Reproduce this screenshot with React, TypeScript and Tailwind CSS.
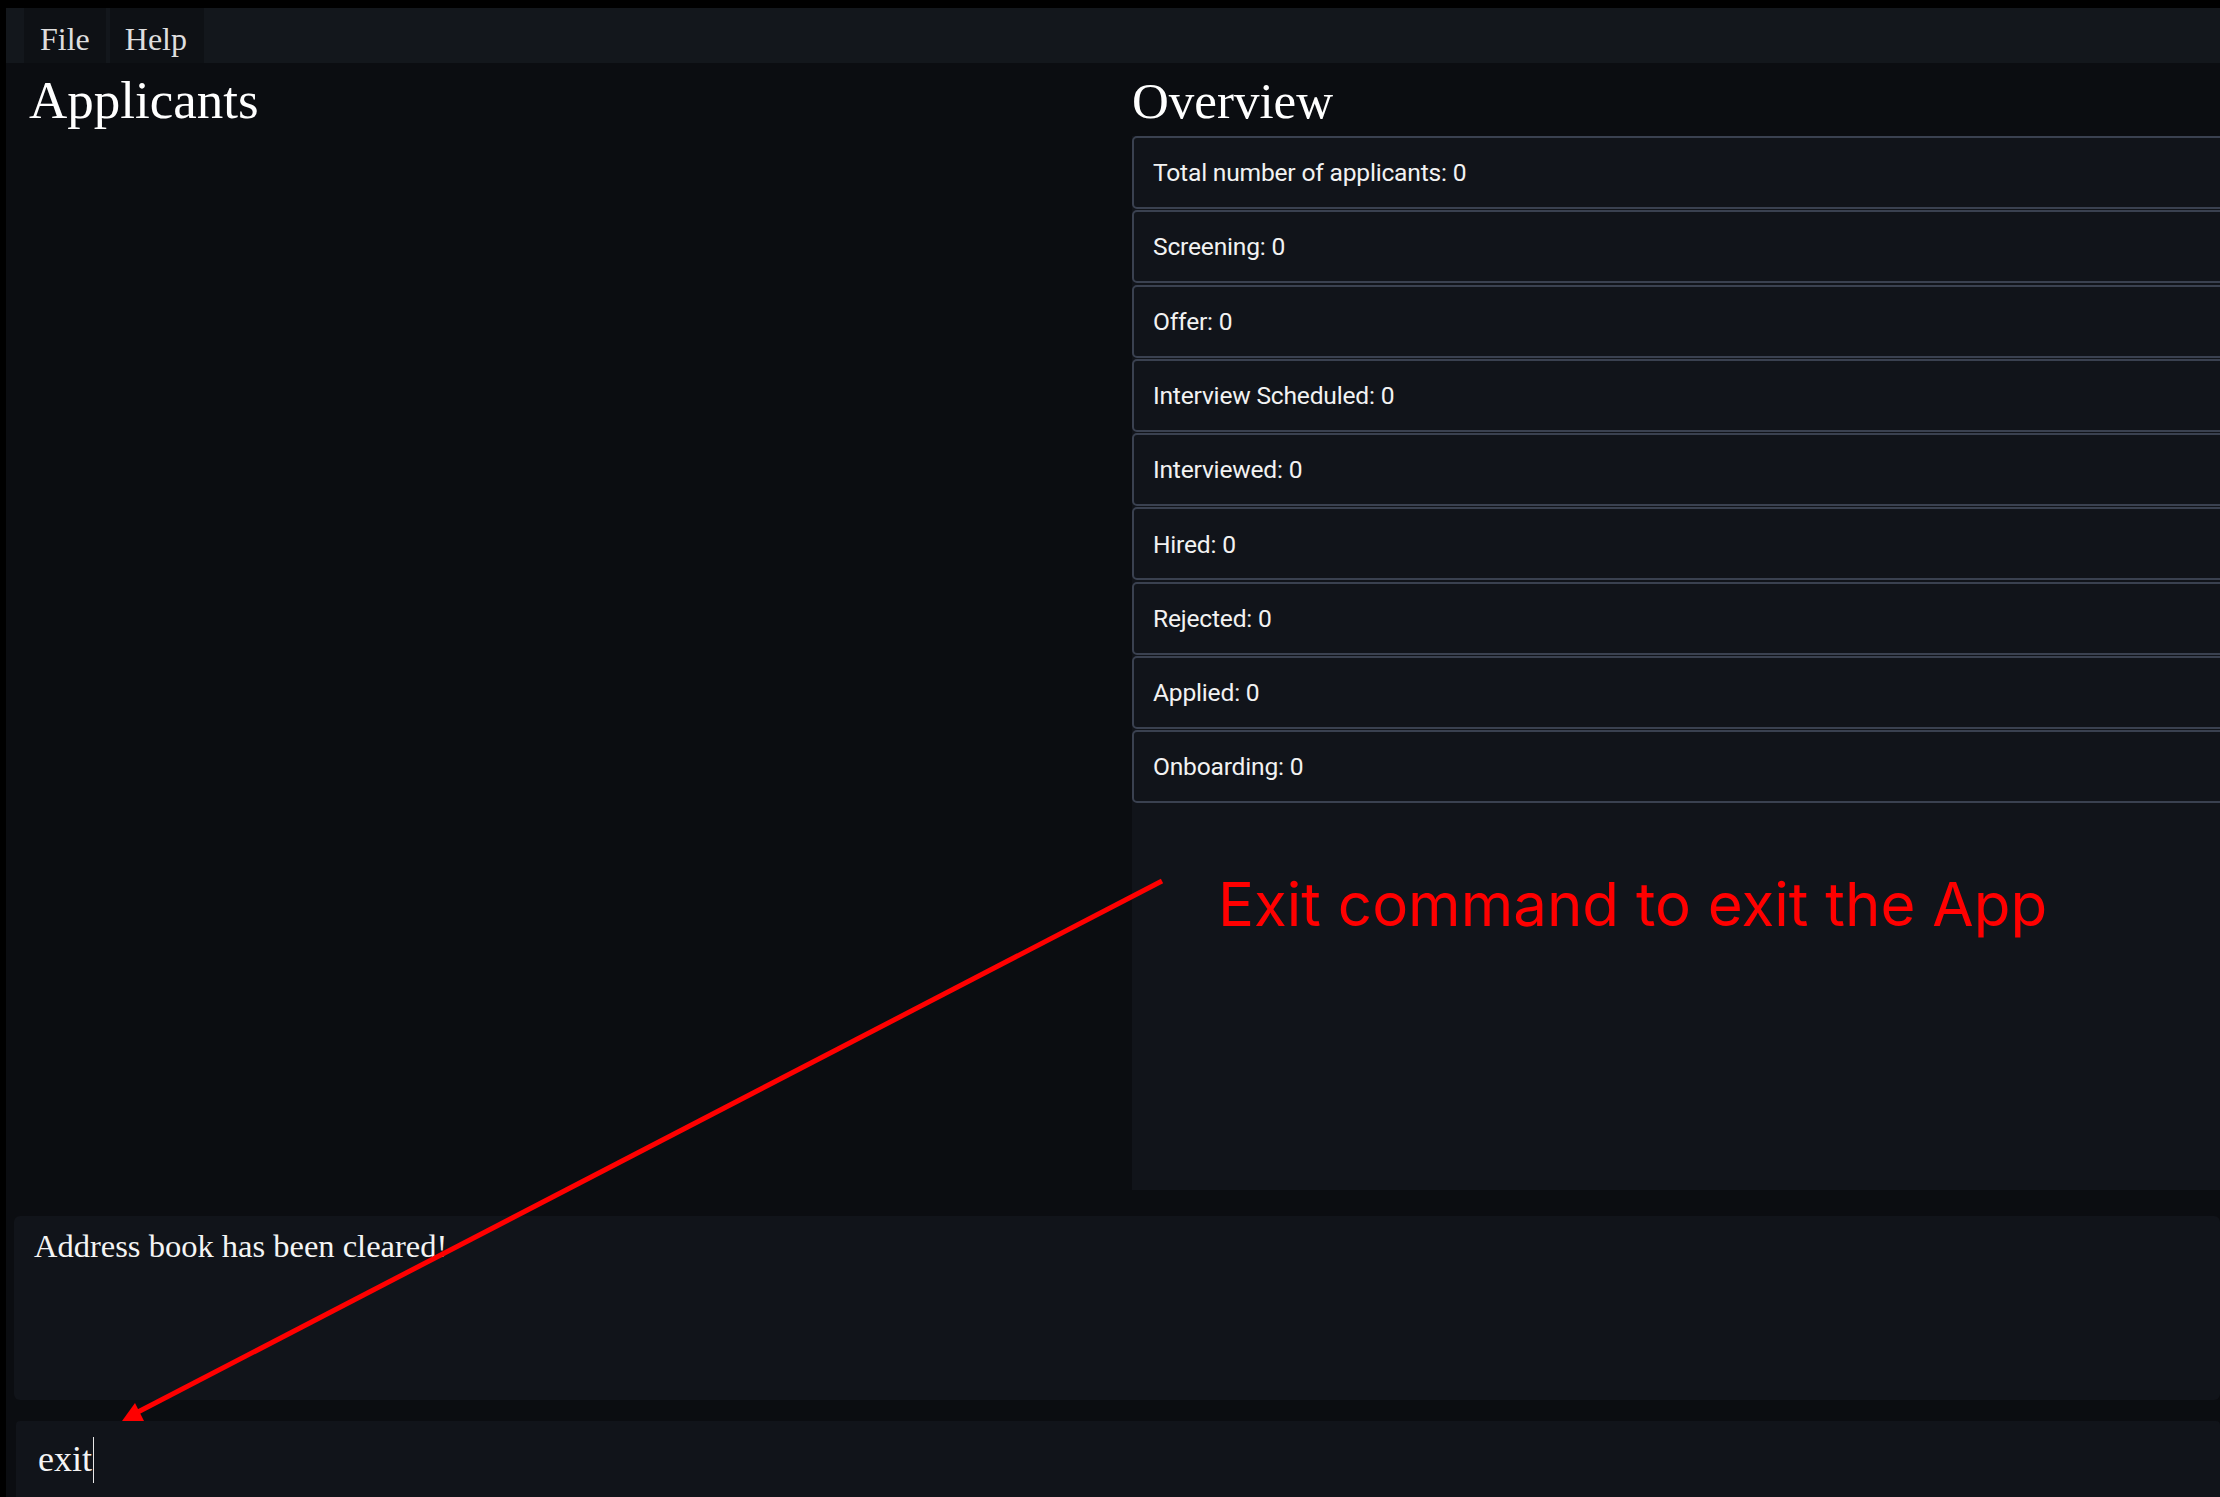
import React from "react";

const serif = { fontFamily: "'Liberation Serif', 'DejaVu Serif', serif" };

const stats = [
  "Total number of applicants: 0",
  "Screening: 0",
  "Offer: 0",
  "Interview Scheduled: 0",
  "Interviewed: 0",
  "Hired: 0",
  "Rejected: 0",
  "Applied: 0",
  "Onboarding: 0",
];

export default function App() {
  return (
    <div className="relative w-[2220px] h-[1497px] overflow-hidden bg-black pl-[6px] pt-[8px]">
      <div className="flex flex-col h-full bg-[#0b0d11]">
        {/* Menu bar */}
        <div className="flex h-[55px] shrink-0 bg-[#13171c] pl-[18px] gap-[4px]" style={serif}>
          <div className="bg-[#0e1115] px-[16px] pt-[15px] text-[32px] leading-none text-[#dedede]">File</div>
          <div className="bg-[#0e1115] pl-[15px] pr-[17px] pt-[15px] text-[32px] leading-none text-[#dedede]">Help</div>
        </div>

        {/* Main area */}
        <div className="flex h-[1127px] shrink-0">
          <div className="w-[1126px] shrink-0 pl-[23px] pt-[11px]">
            <div className="text-[53px] leading-none text-white" style={serif}>Applicants</div>
          </div>
          <div className="flex flex-col w-[1100px] shrink-0">
            <div className="pt-[13px] text-[51px] leading-none text-white" style={serif}>Overview</div>
            <div className="mt-[9px] flex-1 bg-[#11141a] flex flex-col gap-[1.3px]">
              {stats.map((s) => (
                <div
                  key={s}
                  className="h-[73px] shrink-0 rounded-[5px] border-2 border-[#3a4150] bg-[#11141a] flex items-center pl-[19px] pt-[2px] text-[24.6px] tracking-[-0.2px] text-[#f2f2f2]"
                  style={{ fontFamily: "Roboto, 'Liberation Sans', sans-serif" }}
                >
                  {s}
                </div>
              ))}
            </div>
          </div>
        </div>

        {/* Result display */}
        <div className="mt-[26px] ml-[8px] h-[184px] shrink-0 rounded-[6px] bg-[#11141a] pl-[20px] pt-[14px]">
          <div className="text-[32.5px] leading-none text-[#f4f4f4]" style={serif}>Address book has been cleared!</div>
        </div>

        {/* Command box */}
        <div className="mt-[21px] ml-[10px] flex-1 rounded-t-[4px] bg-[#11141a] pl-[22px] pt-[16px]">
          <div className="flex items-start">
            <span className="text-[36px] leading-none text-[#f4f4f4] pt-[4px]" style={serif}>exit</span>
            <span className="ml-[1px] w-[1px] h-[46px] bg-[#e8e8e8]"></span>
          </div>
        </div>
      </div>

      {/* Annotation overlay */}
      <div
        className="absolute left-[1218px] top-[874px] text-[60px] leading-none text-[#ff0000] whitespace-nowrap"
        style={{ fontFamily: "Inter, 'Liberation Sans', sans-serif" }}
      >
        Exit command to exit the App
      </div>
      <svg className="absolute left-0 top-0 pointer-events-none" width="2220" height="1497" viewBox="0 0 2220 1497">
        <line x1="1162" y1="881" x2="136" y2="1413" stroke="#ff0000" strokeWidth="5" />
        <polygon points="122,1421 135,1403 144,1421" fill="#ff0000" />
      </svg>
    </div>
  );
}
